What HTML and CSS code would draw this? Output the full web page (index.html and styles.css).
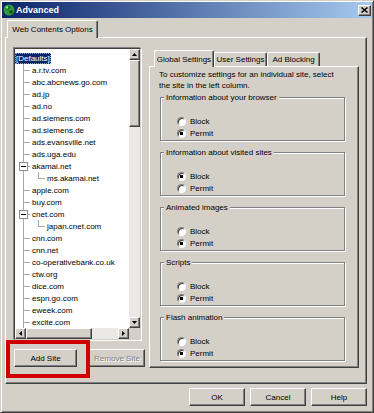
FILE: index.html
```html
<!DOCTYPE html>
<html lang="en">
<head>
  <meta charset="UTF-8">
  <meta name="viewport" content="width=device-width, initial-scale=1">
  <title>Advanced</title>
  <link rel="stylesheet" href="styles.css">
</head>
<body>
  <div class="dialog">
    <!-- Title bar -->
    <div class="titlebar">
      <svg class="app-icon" viewBox="0 0 12 12">
        <circle cx="6" cy="6" r="5.5" fill="#2e9a3c"/>
        <path d="M2 4 L5 2 L7 3 L6 5 L4 6 Z M6 7 L9 6 L10 8 L8 10 L7 9 Z" fill="#0d4f1c"/>
        <circle cx="4" cy="3.5" r="1.3" fill="#a8e884"/>
      </svg>
      <span class="title">Advanced</span>
      <span class="close-btn">
        <svg width="7" height="6" viewBox="0 0 7 6"><path d="M0.5 0.5 L6.5 5.5 M6.5 0.5 L0.5 5.5" stroke="#000" stroke-width="1.5"/></svg>
      </span>
    </div>

    <div class="client">
      <div class="tab-strip outer-tabs">
        <div class="tab active">Web Contents Options</div>
      </div>

      <div class="panel outer-panel">
        <!-- Site list -->
        <div class="site-column">
          <div class="tree">
            <div class="tree-items">
              <div class="tree-row root"><span class="selected">[Defaults]</span></div>
              <div class="tree-row"><span class="gutter"></span>a.r.tv.com</div>
              <div class="tree-row"><span class="gutter"></span>abc.abcnews.go.com</div>
              <div class="tree-row"><span class="gutter"></span>ad.jp</div>
              <div class="tree-row"><span class="gutter"></span>ad.no</div>
              <div class="tree-row"><span class="gutter"></span>ad.siemens.com</div>
              <div class="tree-row"><span class="gutter"></span>ad.siemens.de</div>
              <div class="tree-row"><span class="gutter"></span>ads.evansville.net</div>
              <div class="tree-row"><span class="gutter"></span>ads.uga.edu</div>
              <div class="tree-row"><span class="gutter"><span class="expander"></span></span>akamai.net</div>
              <div class="tree-row level2"><span class="gutter"></span>ms.akamai.net</div>
              <div class="tree-row"><span class="gutter"></span>apple.com</div>
              <div class="tree-row"><span class="gutter"></span>buy.com</div>
              <div class="tree-row"><span class="gutter"><span class="expander"></span></span>cnet.com</div>
              <div class="tree-row level2"><span class="gutter"></span>japan.cnet.com</div>
              <div class="tree-row"><span class="gutter"></span>cnn.com</div>
              <div class="tree-row"><span class="gutter"></span>cnn.net</div>
              <div class="tree-row"><span class="gutter"></span>co-operativebank.co.uk</div>
              <div class="tree-row"><span class="gutter"></span>ctw.org</div>
              <div class="tree-row"><span class="gutter"></span>dice.com</div>
              <div class="tree-row"><span class="gutter"></span>espn.go.com</div>
              <div class="tree-row"><span class="gutter"></span>eweek.com</div>
              <div class="tree-row"><span class="gutter"></span>excite.com</div>
            </div>
            <div class="vscroll">
              <span class="sb-btn"><svg width="5" height="3" viewBox="0 0 5 3"><path d="M2.5 0 L5 3 L0 3 Z"/></svg></span>
              <span class="sb-thumb"></span>
              <span class="sb-track"></span>
              <span class="sb-btn"><svg width="5" height="3" viewBox="0 0 5 3"><path d="M0 0 L5 0 L2.5 3 Z"/></svg></span>
            </div>
            <div class="hscroll">
              <span class="sb-btn"><svg width="3" height="5" viewBox="0 0 3 5"><path d="M0 2.5 L3 0 L3 5 Z"/></svg></span>
              <span class="sb-thumb"></span>
              <span class="sb-track"></span>
              <span class="sb-btn"><svg width="3" height="5" viewBox="0 0 3 5"><path d="M0 0 L3 2.5 L0 5 Z"/></svg></span>
            </div>
            <div class="sb-corner"></div>
          </div>

          <div class="site-buttons">
            <span class="highlight-wrap">
              <button class="btn add-site">Add Site</button>
              <span class="highlight"></span>
            </span>
            <button class="btn remove-site" disabled>Remove Site</button>
          </div>
        </div>

        <!-- Settings tabs -->
        <div class="settings-column">
          <div class="tab-strip inner-tabs">
            <div class="tab active tab-global">Global Settings</div>
            <div class="tab tab-user">User Settings</div>
            <div class="tab tab-ad">Ad Blocking</div>
          </div>
          <div class="panel inner-panel">
            <p class="hint">To customize settings for an individual site, select<br>the site in the left column.</p>

            <div class="group">
              <div class="group-label">Information about your browser</div>
              <div class="radios">
                <label class="radio"><span class="dot"></span>Block</label>
                <label class="radio"><span class="dot checked"></span>Permit</label>
              </div>
            </div>

            <div class="group">
              <div class="group-label">Information about visited sites</div>
              <div class="radios">
                <label class="radio"><span class="dot checked"></span>Block</label>
                <label class="radio"><span class="dot"></span>Permit</label>
              </div>
            </div>

            <div class="group">
              <div class="group-label">Animated images</div>
              <div class="radios">
                <label class="radio"><span class="dot"></span>Block</label>
                <label class="radio"><span class="dot checked"></span>Permit</label>
              </div>
            </div>

            <div class="group">
              <div class="group-label">Scripts</div>
              <div class="radios">
                <label class="radio"><span class="dot"></span>Block</label>
                <label class="radio"><span class="dot checked"></span>Permit</label>
              </div>
            </div>

            <div class="group">
              <div class="group-label">Flash animation</div>
              <div class="radios">
                <label class="radio"><span class="dot"></span>Block</label>
                <label class="radio"><span class="dot checked"></span>Permit</label>
              </div>
            </div>
          </div>
        </div>
      </div>

      <div class="dialog-buttons">
        <button class="btn">OK</button>
        <button class="btn">Cancel</button>
        <button class="btn">Help</button>
      </div>
    </div>
  </div>
</body>
</html>
```

FILE: styles.css
```css
/* Reset */
* {
  box-sizing: border-box;
  margin: 0;
  padding: 0;
}

body {
  font-family: "Liberation Sans", Arial, sans-serif;
  font-size: 8px;
  color: #000;
  background: #d4d0c8;
}

/* Window frame */
.dialog {
  width: 374px;
  height: 413px;
  padding: 1px;
  background: #d4d0c8;
  border: 1px solid;
  border-color: #d4d0c8 #404040 #404040 #d4d0c8;
  box-shadow: inset 1px 1px #fff, inset -1px -1px #808080;
}

.titlebar {
  display: flex;
  align-items: center;
  height: 16px;
  background: linear-gradient(to right, #0a246a, #a6caf0);
  color: #fff;
}

.app-icon {
  width: 12px;
  height: 12px;
  margin-left: 1px;
  flex: none;
}

.title {
  flex: 1;
  margin-left: 1px;
  font-size: 9px;
  font-weight: bold;
}

.close-btn {
  display: flex;
  align-items: center;
  justify-content: center;
  width: 13px;
  height: 11px;
  margin-right: 1px;
}

/* Shared raised look */
.close-btn, .btn, .sb-btn, .sb-thumb {
  background: #d4d0c8;
  border: 1px solid;
  border-color: #fff #404040 #404040 #fff;
  box-shadow: inset -1px -1px #808080;
}

.client {
  padding: 2px 5px 0 3px;
}

/* Tabs */
.tab-strip {
  display: flex;
  align-items: flex-end;
  position: relative;
  z-index: 1;
}

.tab {
  display: flex;
  align-items: center;
  justify-content: center;
  white-space: nowrap;
  background: #d4d0c8;
  border: 1px solid;
  border-bottom: 0;
  border-color: #fff #404040 #fff #fff;
  box-shadow: inset -1px 0 #808080;
  border-radius: 2px 2px 0 0;
}

.tab.active {
  margin-bottom: -1px;
}

.outer-tabs {
  height: 17px;
  padding-left: 2px;
}

.outer-tabs .tab {
  width: 91px;
  height: 18px;
}

.inner-tabs {
  height: 16px;
  padding-left: 5px;
}

.tab-global {
  width: 60px;
  height: 17px;
}

.tab-user, .tab-ad {
  width: 53px;
  height: 14px;
}

.panel {
  background: #d4d0c8;
  border: 1px solid;
  border-color: #fff #404040 #404040 #fff;
  box-shadow: inset -1px -1px #808080;
}

.outer-panel {
  display: flex;
  height: 347px;
  padding: 10px 0 0 8px;
}

/* Site tree */
.site-column {
  width: 135px;
  flex: none;
}

.tree {
  display: grid;
  grid-template-columns: 1fr 11px;
  grid-template-rows: 1fr 11px;
  width: 127px;
  height: 292px;
  background: #fff;
  border: 1px solid;
  border-color: #404040 #d4d0c8 #d4d0c8 #404040;
  box-shadow: -1px -1px #808080, 1px 1px #fff;
}

.tree-items {
  overflow: hidden;
  padding-top: 3px;
}

.tree-row {
  display: flex;
  align-items: center;
  height: 12px;
  white-space: nowrap;
}

.selected {
  padding: 0 1px;
  line-height: 11px;
  background: #0a246a;
  color: #fff;
  outline: 1px dotted #9aa4c4;
  outline-offset: -1px;
}

.gutter {
  display: flex;
  align-items: center;
  align-self: stretch;
  flex: none;
  width: 17px;
  background:
    linear-gradient(#a8a8a8, #a8a8a8) 8px 0 / 1px 100% no-repeat,
    linear-gradient(#a8a8a8, #a8a8a8) 8px 6px / 7px 1px no-repeat;
}

.level2 .gutter {
  width: 32px;
  background:
    linear-gradient(#a8a8a8, #a8a8a8) 8px 0 / 1px 100% no-repeat,
    linear-gradient(#a8a8a8, #a8a8a8) 23px 0 / 1px 7px no-repeat,
    linear-gradient(#a8a8a8, #a8a8a8) 23px 6px / 7px 1px no-repeat;
}

.expander {
  width: 9px;
  height: 9px;
  margin-left: 4px;
  border: 1px solid #909090;
  background: linear-gradient(#000, #000) center / 5px 1px no-repeat, #fff;
}

/* Scroll bars */
.vscroll {
  display: flex;
  flex-direction: column;
}

.hscroll {
  display: flex;
}

.sb-btn {
  display: flex;
  align-items: center;
  justify-content: center;
  flex: none;
  width: 11px;
  height: 11px;
}

.vscroll .sb-thumb {
  height: 67px;
  flex: none;
}

.hscroll .sb-thumb {
  width: 66px;
  flex: none;
}

.sb-track {
  flex: 1;
  background: #ebe9e5;
}

.sb-corner {
  background: #d4d0c8;
}

/* Buttons */
.btn {
  font: inherit;
  height: 18px;
  color: #000;
}

.site-buttons {
  display: flex;
  margin-top: 9px;
}

.highlight-wrap {
  position: relative;
  display: flex;
}

.add-site {
  width: 63px;
}

.highlight {
  position: absolute;
  left: -8px;
  top: -9px;
  width: 84px;
  height: 38px;
  border: 4px solid #d10000;
}

.remove-site {
  width: 56px;
  margin-left: 12px;
  color: #808080;
  text-shadow: 1px 1px #fff;
}

/* Settings panel */
.settings-column {
  width: 210px;
  flex: none;
  margin-top: 2px;
}

.inner-panel {
  height: 302px;
  padding: 2px 0 0 9px;
}

.hint {
  line-height: 11px;
}

.group {
  width: 185px;
  height: 44px;
  margin: 11px 0 0 1px;
  border: 1px solid #808080;
  box-shadow: inset 1px 1px #fff, 1px 1px #fff;
}

.hint + .group {
  margin-top: 6px;
}

.group-label {
  width: fit-content;
  margin: -6px 0 0 3px;
  padding: 0 2px;
  line-height: 11px;
  background: #d4d0c8;
}

.radios {
  margin-top: 12px;
  padding-left: 16px;
}

.radio {
  display: flex;
  align-items: center;
  gap: 4px;
  height: 12px;
}

.dot {
  width: 9px;
  height: 9px;
  flex: none;
  border-radius: 50%;
  background: #fff;
  border: 1px solid;
  border-color: #808080 #fff #fff #808080;
  box-shadow: inset 1px 1px #404040;
}

.dot.checked {
  background: radial-gradient(circle, #000 1.4px, #fff 2px);
}

/* Dialog buttons */
.dialog-buttons {
  display: flex;
  justify-content: flex-end;
  gap: 5px;
  margin-top: 4px;
}

.dialog-buttons .btn {
  width: 56px;
}
```
